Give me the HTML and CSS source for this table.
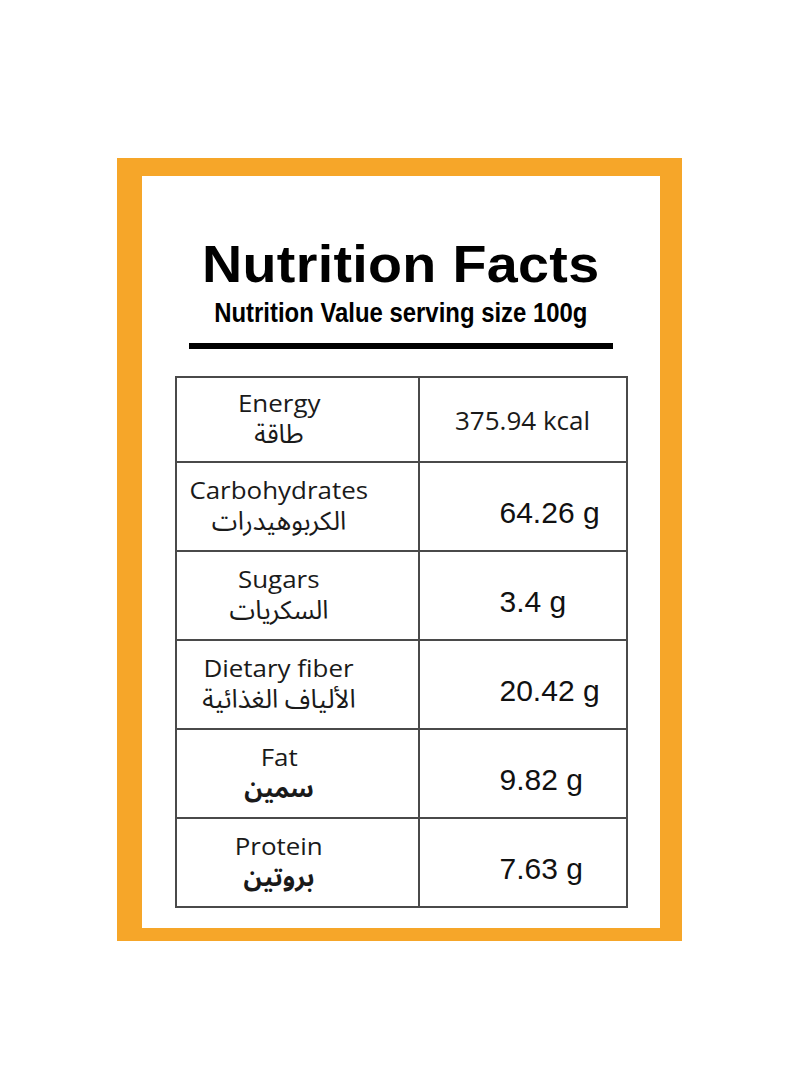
FILE: index.html
```html
<!DOCTYPE html>
<html lang="en">
<head>
<meta charset="utf-8">
<title>Nutrition Facts</title>
<link rel="stylesheet" href="styles.css">
</head>
<body>
  <div class="frame">
    <h1 class="title">Nutrition Facts</h1>
    <p class="subtitle">Nutrition Value serving size 100g</p>
    <div class="rule"></div>
    <div class="facts">
      <div class="name"><span class="en">Energy</span><span class="ar" dir="rtl">طاقة</span></div>
      <div class="value kcal">375.94 kcal</div>

      <div class="name"><span class="en">Carbohydrates</span><span class="ar" dir="rtl">الكربوهيدرات</span></div>
      <div class="value">64.26 g</div>

      <div class="name"><span class="en">Sugars</span><span class="ar" dir="rtl">السكريات</span></div>
      <div class="value">3.4 g</div>

      <div class="name"><span class="en">Dietary fiber</span><span class="ar" dir="rtl">الألياف الغذائية</span></div>
      <div class="value">20.42 g</div>

      <div class="name"><span class="en">Fat</span><span class="ar bold" dir="rtl">سمين</span></div>
      <div class="value">9.82 g</div>

      <div class="name"><span class="en">Protein</span><span class="ar bold" dir="rtl">بروتين</span></div>
      <div class="value">7.63 g</div>
    </div>
  </div>
</body>
</html>
```

FILE: styles.css
```css
html, body {
  margin: 0;
  padding: 0;
  background: #ffffff;
}

body {
  width: 800px;
  height: 1092px;
  color: #111;
}

.frame {
  box-sizing: border-box;
  width: 565px;
  margin: 158px 0 0 117px;
  border-style: solid;
  border-color: #f6a629;
  border-width: 18px 22px 13px 25px;
  background: #fff;
  padding: 62px 0 20px;
  display: flex;
  flex-direction: column;
  align-items: center;
}

.title {
  margin: 0;
  font-family: "Liberation Sans", Arial, Helvetica, sans-serif;
  font-weight: bold;
  font-size: 52px;
  line-height: 52px;
  letter-spacing: 0.3px;
  color: #000;
  text-align: center;
  white-space: nowrap;
  transform: scaleX(1.07);
}

.subtitle {
  margin: 10px 0 0;
  font-family: "Liberation Sans", Arial, Helvetica, sans-serif;
  font-weight: bold;
  font-size: 27px;
  line-height: 27px;
  color: #000;
  text-align: center;
  transform: scaleX(0.885);
  white-space: nowrap;
}

.rule {
  width: 424px;
  height: 6px;
  margin-top: 16px;
  background: #000;
}

.facts {
  margin-top: 27px;
  width: 453px;
  box-sizing: border-box;
  display: grid;
  grid-template-columns: 243px 208px;
  grid-template-rows: 85px repeat(5, 89px);
  border-top: 2px solid #4a4a4a;
  border-left: 2px solid #4a4a4a;
}

.name,
.value {
  box-sizing: border-box;
  border-right: 2px solid #4a4a4a;
  border-bottom: 2px solid #4a4a4a;
  display: flex;
  flex-direction: column;
  justify-content: center;
}

.name {
  align-items: center;
  padding-right: 36px;
}

.en {
  display: inline-block;
  font-family: "Open Sans", "Liberation Sans", sans-serif;
  font-size: 24px;
  line-height: 28px;
  color: #1a1a1a;
  white-space: nowrap;
  transform: scaleX(1.08);
}

.ar {
  margin-top: 3px;
  font-family: "Noto Sans Arabic", "DejaVu Sans", sans-serif;
  font-size: 26px;
  line-height: 30px;
  color: #1a1a1a;
  white-space: nowrap;
}

.ar.bold {
  font-size: 25px;
  font-weight: bold;
}

.value {
  padding: 12px 0 0 80px;
  font-family: "Liberation Sans", Arial, Helvetica, sans-serif;
  font-size: 30px;
  line-height: 30px;
  color: #111;
}

.value.kcal {
  padding: 0;
  align-items: center;
  font-family: "Open Sans", "Liberation Sans", sans-serif;
  font-size: 26px;
  line-height: 30px;
  color: #1a1a1a;
}
```
